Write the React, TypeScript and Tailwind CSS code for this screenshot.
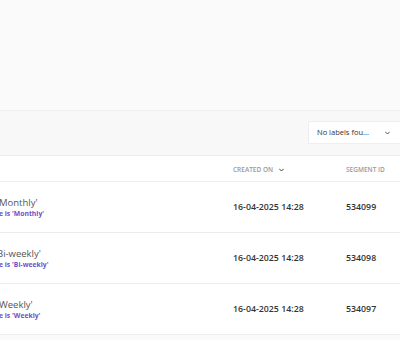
const rows = [
  { name: "Monthly'", rule: "e is 'Monthly'", created: "16-04-2025 14:28", id: "534099", nameShift: "-ml-[1px]" },
  { name: "Bi-weekly'", rule: "e is 'Bi-weekly'", created: "16-04-2025 14:28", id: "534098", nameShift: "-ml-[3px]" },
  { name: "Weekly'", rule: "e is 'Weekly'", created: "16-04-2025 14:28", id: "534097", nameShift: "-ml-[1px]" },
];

const Chevron = ({ className }: { className?: string }) => (
  <svg className={className} viewBox="0 0 10 6" fill="none">
    <path d="M1 1l4 4 4-4" stroke="currentColor" strokeWidth="2" strokeLinecap="round" strokeLinejoin="round" />
  </svg>
);

export default function App() {
  return (
    <div className="w-[400px] h-[340px] overflow-hidden bg-[#fafafa] font-['Open_Sans',sans-serif]">
      <div className="h-[111px] border-b border-[#f0f0f0]" />
      <div className="h-[45px] bg-[#f8f8f8] border-b border-[#ececec] flex items-start justify-end pt-[10px]">
        <div className="w-[100px] h-[23px] bg-white border border-[#eeeeee] flex items-center pl-[8px] -mr-[8px] shrink-0">
          <span className="text-[7.5px] text-[#333] flex-1">No labels fou...</span>
          <Chevron className="w-[5px] h-[4px] text-[#555] mr-[17px]" />
        </div>
      </div>
      <div className="bg-white">
        <div className="h-[26px] flex items-center border-b border-[#ededed] text-[6.5px] font-semibold uppercase text-[#999] pt-[2px]">
          <div className="w-[233px]" />
          <div className="w-[113px] flex items-center gap-[6px]">
            Created on
            <Chevron className="w-[5px] h-[4px] text-[#444]" />
          </div>
          <div>Segment ID</div>
        </div>
        {rows.map((r) => (
          <div key={r.id} className="h-[51px] flex items-center border-b border-[#ececec]">
            <div className="w-[233px] overflow-hidden flex flex-col whitespace-nowrap pt-[1px]">
              <span className={`text-[9.5px] leading-[13px] text-[#555] ${r.nameShift}`}>{r.name}</span>
              <span className="text-[6.8px] leading-[10px] font-bold text-[#7050c8] -ml-[1px]">{r.rule}</span>
            </div>
            <div className="w-[113px] text-[8.8px] font-semibold text-[#333] pt-[1px]">{r.created}</div>
            <div className="text-[8.8px] font-semibold text-[#333] pt-[1px]">{r.id}</div>
          </div>
        ))}
      </div>
    </div>
  );
}
